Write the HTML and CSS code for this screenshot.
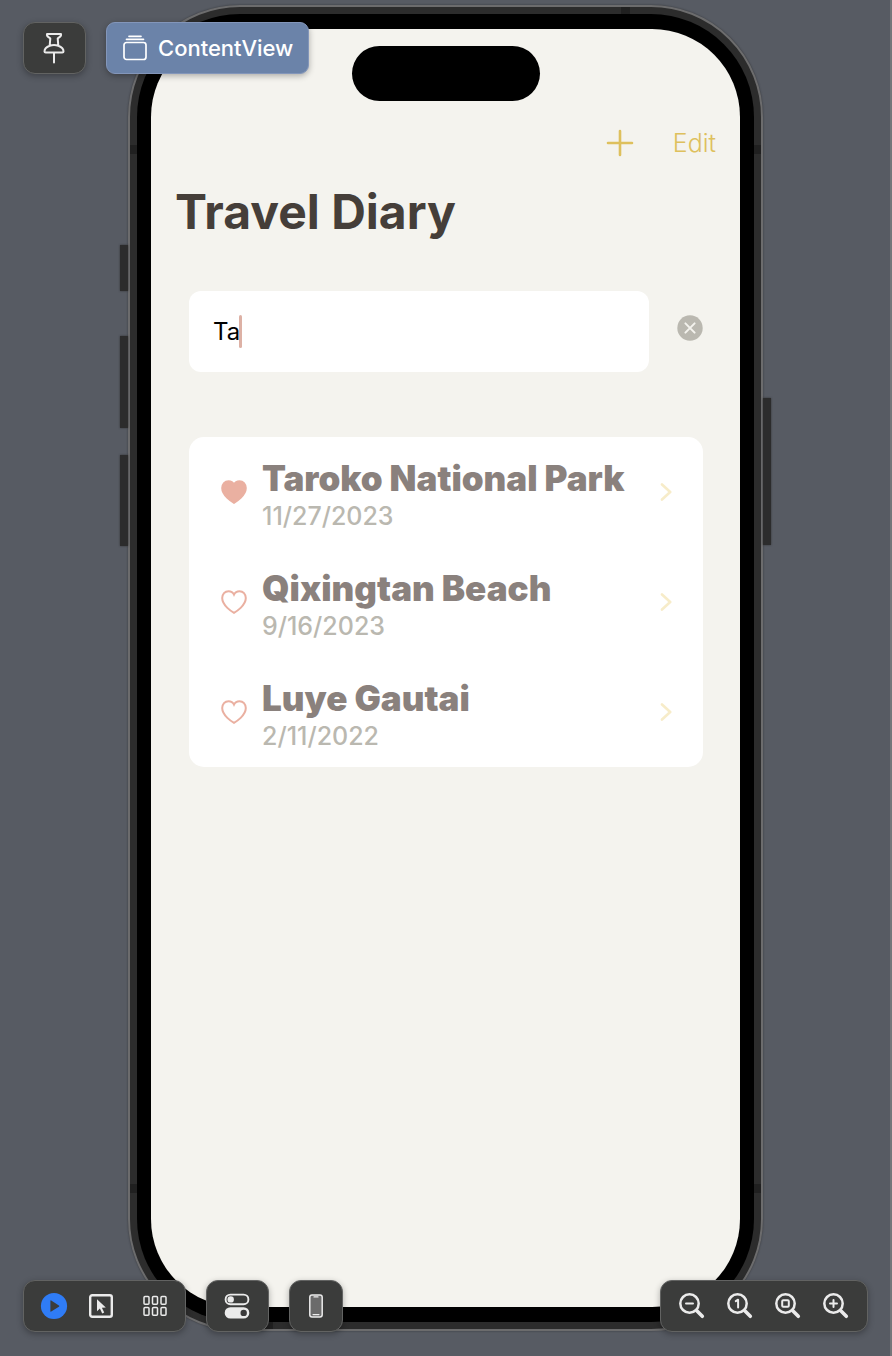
FILE: index.html
```html
<!DOCTYPE html>
<html lang="en">
<head>
<meta charset="utf-8">
<meta name="viewport" content="width=device-width, initial-scale=1">
<title>Travel Diary Preview</title>
<link rel="stylesheet" href="styles.css">
</head>
<body>
<main class="canvas">
  <section class="phone" aria-label="Phone preview">
    <i class="side-key mute"></i><i class="side-key vol-up"></i><i class="side-key vol-down"></i><i class="side-key power"></i>
    <i class="band band-lt"></i><i class="band band-rt"></i><i class="band band-lb"></i><i class="band band-rb"></i><i class="band band-top"></i><i class="band band-bottom"></i>
    <div class="bezel">
      <div class="screen">
        <div class="island"></div>
        <nav class="nav">
          <button class="nav-btn" type="button" aria-label="Add">
            <svg width="28" height="28" viewBox="0 0 28 28"><path d="M14 2v24M2 14h24" fill="none" stroke="currentColor" stroke-width="2.6" stroke-linecap="round"/></svg>
          </button>
          <button class="nav-btn" type="button">Edit</button>
        </nav>
        <h1 class="title">Travel Diary</h1>
        <div class="search">
          <label class="search-box">
            <input class="search-input" type="text" value="Ta" size="2" aria-label="Search"><span class="caret"></span>
          </label>
          <button class="clear" type="button" aria-label="Clear">
            <svg width="26" height="26" viewBox="0 0 26 26"><circle cx="13" cy="13" r="12.7" fill="#bab8b0"/><path d="M8.4 8.4l9.2 9.2M17.6 8.4l-9.2 9.2" stroke="#f4f3ee" stroke-width="2" stroke-linecap="round"/></svg>
          </button>
        </div>
        <ul class="list">
          <li class="row">
            <svg class="heart filled" viewBox="0 0 26 24"><path d="M13 22.8C11 21.8 1.2 15.600 1.200 8.100C1.200 4.200 3.900 1.200 7.500 1.200C10 1.200 12 2.500 13 4.600C14 2.500 16 1.200 18.500 1.200C22.100 1.200 24.800 4.200 24.800 8.100C24.800 15.600 15 21.800 13 22.800Z"/></svg>
            <div class="entry"><h2 class="place">Taroko National Park</h2><p class="date">11/27/2023</p></div>
            <svg class="chevron" viewBox="0 0 12 20"><path d="M2 2.500l8.200 7.500L2 17.500"/></svg>
          </li>
          <li class="row">
            <svg class="heart" viewBox="0 0 26 24"><path d="M13 22.8C11 21.8 1.2 15.600 1.200 8.100C1.200 4.200 3.900 1.200 7.500 1.200C10 1.200 12 2.500 13 4.600C14 2.500 16 1.200 18.500 1.200C22.100 1.200 24.800 4.200 24.800 8.100C24.800 15.600 15 21.800 13 22.800Z"/></svg>
            <div class="entry"><h2 class="place">Qixingtan Beach</h2><p class="date">9/16/2023</p></div>
            <svg class="chevron" viewBox="0 0 12 20"><path d="M2 2.500l8.200 7.500L2 17.500"/></svg>
          </li>
          <li class="row">
            <svg class="heart" viewBox="0 0 26 24"><path d="M13 22.8C11 21.8 1.2 15.600 1.200 8.100C1.200 4.200 3.900 1.200 7.500 1.200C10 1.200 12 2.500 13 4.600C14 2.500 16 1.200 18.500 1.200C22.100 1.200 24.800 4.200 24.800 8.100C24.800 15.600 15 21.800 13 22.800Z"/></svg>
            <div class="entry"><h2 class="place">Luye Gautai</h2><p class="date">2/11/2022</p></div>
            <svg class="chevron" viewBox="0 0 12 20"><path d="M2 2.500l8.200 7.500L2 17.500"/></svg>
          </li>
        </ul>
      </div>
    </div>
  </section>

  <header class="toolbar toolbar-top">
    <div class="group">
      <button class="tool pin" type="button" aria-label="Pin preview">
        <svg width="22" height="32" viewBox="0 0 22 32" fill="none" stroke="currentColor" stroke-width="2" stroke-linecap="round" stroke-linejoin="round"><path d="M4 2h14c.5 1.800-.6 3-3.300 4.300l.6 7.400c3.400 1.200 5.200 3.300 5.200 5.700 0 .8-.4 1.100-1.200 1.100H2.700c-.8 0-1.200-.3-1.200-1.100 0-2.400 1.800-4.500 5.200-5.700l.6-7.400C4.600 5 3.500 3.800 4 2zM6.700 13.700c2.600-.9 6-.9 8.600 0M11 20.500V30.500"/></svg>
      </button>
    </div>
    <div class="group accent">
      <button class="tool view-name" type="button">
        <svg width="24" height="26" viewBox="0 0 24 26" fill="none" stroke="currentColor" stroke-width="1.700" stroke-linecap="round"><rect x="1" y="7.500" width="22" height="17" rx="2.500"/><path d="M3.500 4.300h17M6 1.300h12"/></svg>
        ContentView
      </button>
    </div>
  </header>

  <footer class="toolbar toolbar-bottom">
    <div class="group modes">
      <button class="tool" type="button" aria-label="Live preview"><svg width="28" height="28" viewBox="0 0 28 28"><circle cx="14" cy="14" r="13.100" fill="#2f7cf6"/><path d="M10.400 8.800v10.400c0 .5.400.7.800.4l7.700-4.900c.5-.3.500-1 0-1.300l-7.700-5c-.4-.3-.8 0-.8.400z" fill="#3b3c3b"/></svg></button>
      <button class="tool" type="button" aria-label="Selectable"><svg width="26" height="26" viewBox="0 0 26 26"><rect x="2.200" y="2.200" width="21.600" height="21.600" rx="2" fill="none" stroke="currentColor" stroke-width="2.400"/><path d="M9 6.200v12l2.900-2.700 2.300 5 2-.9-2.300-4.900 3.900-.3z" fill="currentColor"/></svg></button>
      <button class="tool" type="button" aria-label="Variants"><svg width="24" height="22" viewBox="0 0 24 22" fill="none" stroke="currentColor" stroke-width="1.500"><rect x="1" y="1.500" width="5" height="7.700" rx="1"/><rect x="9.500" y="1.500" width="5" height="7.700" rx="1"/><rect x="18" y="1.500" width="5" height="7.700" rx="1"/><rect x="1" y="12.500" width="5" height="7.700" rx="1"/><rect x="9.500" y="12.500" width="5" height="7.700" rx="1"/><rect x="18" y="12.500" width="5" height="7.700" rx="1"/></svg></button>
    </div>
    <div class="group settings">
      <button class="tool" type="button" aria-label="Device settings"><svg width="26" height="26" viewBox="0 0 26 26"><rect x="1.600" y="1.600" width="22.800" height="9.600" rx="4.800" fill="none" stroke="currentColor" stroke-width="1.900"/><circle cx="6.700" cy="6.400" r="3.200" fill="currentColor"/><rect x=".7" y="14.200" width="24.600" height="11.400" rx="5.700" fill="currentColor"/><circle cx="19.700" cy="19.900" r="3.200" fill="#3b3b3b"/></svg></button>
    </div>
    <div class="group device">
      <button class="tool" type="button" aria-label="Choose device"><svg width="16" height="24" viewBox="0 0 16 24"><rect x="1.800" y="1" width="12.400" height="22" rx="2.200" fill="#6b6b6b" stroke="currentColor" stroke-width="1.500"/><path d="M6 2.900h4M5 20.600h6" stroke="currentColor" stroke-width="1.200" stroke-linecap="round"/></svg></button>
    </div>
    <div class="group zooms">
      <button class="tool" type="button" aria-label="Zoom out"><svg class="lens" viewBox="0 0 28 28"><circle cx="11.500" cy="11.500" r="9.200"/><path class="grip" d="M18.800 18.800l5.500 5.500"/><path class="mark" d="M8 11.500h7"/></svg></button>
      <button class="tool" type="button" aria-label="Zoom to actual size"><svg class="lens" viewBox="0 0 28 28"><circle cx="11.500" cy="11.500" r="9.200"/><path class="grip" d="M18.800 18.800l5.500 5.500"/><path class="mark" d="M9.800 9.200l2.300-1.500v7.800"/></svg></button>
      <button class="tool" type="button" aria-label="Zoom to fit"><svg class="lens" viewBox="0 0 28 28"><circle cx="11.500" cy="11.500" r="9.200"/><path class="grip" d="M18.800 18.800l5.500 5.500"/><rect class="mark" x="8.200" y="8.200" width="6.600" height="6.600" rx="1"/></svg></button>
      <button class="tool" type="button" aria-label="Zoom in"><svg class="lens" viewBox="0 0 28 28"><circle cx="11.500" cy="11.500" r="9.200"/><path class="grip" d="M18.800 18.800l5.500 5.500"/><path class="mark" d="M8 11.500h7M11.500 8v7"/></svg></button>
    </div>
  </footer>
</main>
</body>
</html>
```
FILE: styles.css
```css
*, *::before, *::after { box-sizing: border-box; }

body {
  margin: 0;
  background: #575b63;
  font-family: Inter, "Liberation Sans", sans-serif;
}

button {
  border: 0;
  padding: 0;
  background: none;
  color: inherit;
  font: inherit;
}

h1, h2, p, ul { margin: 0; padding: 0; }
svg { display: block; }

.canvas {
  position: relative;
  display: flex;
  min-height: 100vh;
  padding: 5px 127px 25px 128px;
  border-right: 2px solid #75767a;
}

/* Phone body */
.phone {
  position: relative;
  display: flex;
  flex: 1;
  padding: 7px;
  border: 2px solid #6c6c6d;
  border-radius: 112px;
  background: #2c2c2c;
  box-shadow: 0 0 2px #303236;
}

.bezel {
  display: flex;
  flex: 1;
  padding: 15px 14px;
  border-radius: 103px;
  background: #000;
}

.screen {
  display: flex;
  flex: 1;
  flex-direction: column;
  border-radius: 88px;
  background: #f4f3ee;
}

.side-key {
  position: absolute;
  left: -10px;
  width: 8px;
  background: #2c2c2c;
  box-shadow: 0 0 2px #2c2c2c;
}
.mute { top: 238px; height: 46px; }
.vol-up { top: 329px; height: 92px; }
.vol-down { top: 448px; height: 91px; }
.power { top: 391px; right: -10px; left: auto; height: 147px; }

.band {
  position: absolute;
  width: 7px;
  height: 9px;
  background: #202020;
}
.band-lt { top: 138px; left: 0; }
.band-rt { top: 138px; right: 0; }
.band-lb { bottom: 136px; left: 0; }
.band-rb { bottom: 136px; right: 0; }
.band-top { top: 0; right: 131px; width: 9px; height: 7px; }
.band-bottom { bottom: 0; left: 134px; width: 9px; height: 7px; }

/* App screen */
.island {
  align-self: center;
  width: 188px;
  height: 55px;
  margin-top: 17px;
  border-radius: 28px;
  background: #000;
}

.nav {
  display: flex;
  align-items: center;
  justify-content: flex-end;
  gap: 39px;
  height: 40px;
  margin-top: 22px;
  padding-right: 24px;
  color: #dec05d;
  font-size: 25px;
  font-weight: 350;
}

.title {
  margin-top: 19px;
  padding-left: 24px;
  color: #453e39;
  font-size: 48px;
  font-weight: 700;
  line-height: 60px;
}

.search {
  display: flex;
  align-items: center;
  gap: 28px;
  margin: 49px 37px 0 38px;
}

.search-box {
  display: flex;
  flex: 1;
  align-items: center;
  min-width: 0;
  height: 81px;
  padding: 0 24px;
  border-radius: 12px;
  background: #fff;
}

.search-input {
  width: 26px;
  border: 0;
  padding: 0;
  outline: 0;
  background: none;
  color: #000;
  font: 400 24px/32px Inter, "Liberation Sans", sans-serif;
  field-sizing: content;
}

.caret {
  width: 3px;
  height: 33px;
  border-radius: 2px;
  background: #ddb1a5;
}

.clear { padding-bottom: 8px; }

.list {
  margin: 65px 37px 0 38px;
  border-radius: 15px;
  background: #fff;
  list-style: none;
}

.row {
  display: flex;
  align-items: center;
  height: 110px;
  padding: 0 31px 0 32px;
}

.heart {
  width: 26px;
  height: 24px;
  margin-right: 15px;
  fill: none;
  stroke: #eab0a1;
  stroke-width: 2;
}
.heart.filled { fill: #eab0a1; }

.entry {
  flex: 1;
  min-width: 0;
  padding-top: 8px;
  white-space: nowrap;
}

.place {
  color: #8a817d;
  font-size: 35px;
  font-weight: 900;
  line-height: 40px;
}

.date {
  color: #bab8b0;
  font-size: 25px;
  font-weight: 500;
  line-height: 36px;
}

.chevron {
  width: 12px;
  height: 20px;
  fill: none;
  stroke: #f7ecc9;
  stroke-width: 2.6;
  stroke-linecap: round;
  stroke-linejoin: round;
}

/* Floating toolbars */
.toolbar {
  position: absolute;
  right: 22px;
  left: 23px;
  display: flex;
  gap: 20px;
  color: #ebebeb;
}
.toolbar-top { top: 22px; }
.toolbar-bottom { bottom: 24px; }

.group {
  display: flex;
  align-items: center;
  justify-content: center;
  height: 52px;
  border: 1px solid #626362;
  border-radius: 12px;
  background: #3b3c3b;
  box-shadow: 0 2px 6px rgba(0, 0, 0, .3);
}

.pin { padding: 0 20px 0 19px; }

.accent {
  border-color: #8396ba;
  border-radius: 9px;
  background: #6b83a9;
  color: #fff;
}

.view-name {
  display: flex;
  align-items: center;
  gap: 11px;
  padding: 0 15px 0 16px;
  font-size: 22px;
  font-weight: 500;
}

.modes { gap: 20px; padding: 0 18px 0 16px; }
.modes .tool:last-child { padding-left: 9px; }
.settings { padding: 0 18px 0 17px; }
.device { padding: 0 18px; }
.zooms { gap: 20px; margin-left: auto; padding: 0 17px; }

.lens {
  width: 28px;
  height: 28px;
  fill: none;
  stroke: currentColor;
  stroke-width: 2.5;
  stroke-linecap: round;
  stroke-linejoin: round;
}
.lens .grip { stroke-width: 3.6; }
.lens .mark { stroke-width: 2; }
```
